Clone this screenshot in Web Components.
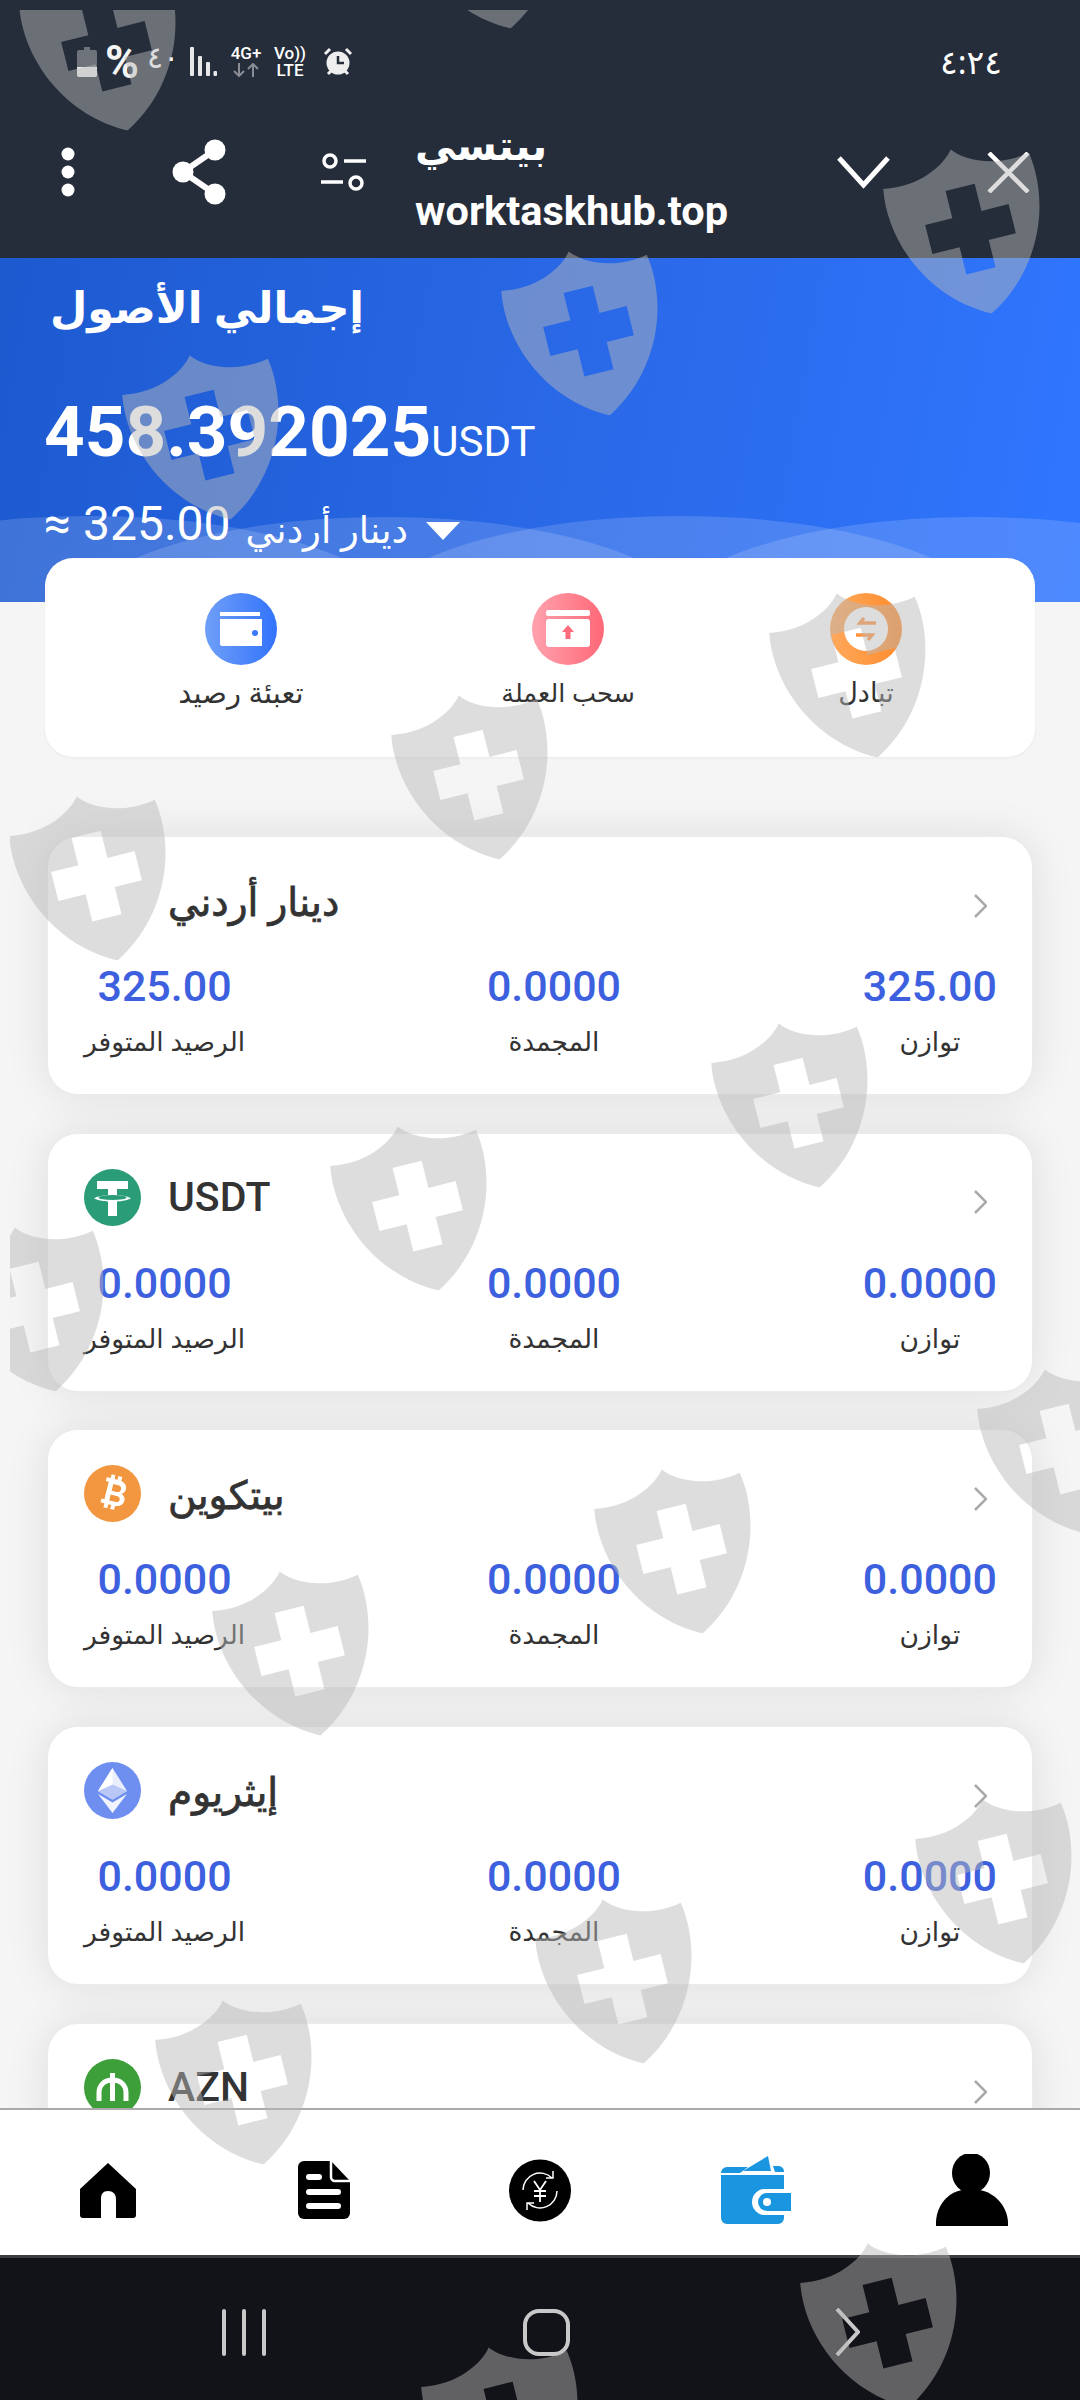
<!DOCTYPE html>
<html lang="ar">
<head>
<meta charset="utf-8">
<title>worktaskhub</title>
<style>
  html, body { margin: 0; padding: 0; background: #f5f5f5; }
  body { font-family: Roboto, "Noto Sans", "DejaVu Sans", sans-serif; }
</style>
</head>
<body>
<app-shell>
  <status-bar></status-bar>
  <site-header></site-header>
  <asset-hero></asset-hero>
  <quick-actions></quick-actions>
  <asset-card slot="cards" name="دينار أردني" available="325.00" frozen="0.0000" balance="325.00"></asset-card>
  <asset-card slot="cards" name="USDT" available="0.0000" frozen="0.0000" balance="0.0000">
    <svg slot="icon" viewBox="0 0 57 57" width="57" height="57"><circle cx="28.5" cy="28.5" r="28.5" fill="#2a9d78"/><path d="M13 12h31v8H33v6.200c5 .2 11 1.200 14 3.100-3 1.900-9 3-14 3.200V47h-9V32.500c-5-.2-11-1.300-14-3.200 3-1.900 9-2.900 14-3.100V20H13z" fill="#fff"/><ellipse cx="28.500" cy="28.500" rx="14" ry="2.600" fill="#2a9d78"/></svg>
  </asset-card>
  <asset-card slot="cards" name="بيتكوين" available="0.0000" frozen="0.0000" balance="0.0000">
    <svg slot="icon" viewBox="0 0 57 57" width="57" height="57"><circle cx="28.500" cy="28.500" r="28.500" fill="#f2963f"/><g transform="rotate(14 28.500 28.500)"><path fill="#fff" fill-rule="evenodd" d="M19 14h4v-4h4v4h3v-4h4v4.300c4 .9 6.500 3.200 6.500 6.700 0 2.500-1.300 4.400-3.300 5.500 2.800 1 4.600 3.200 4.600 6.200 0 4.300-3 6.800-7.800 7.200V44h-4v-4h-3v4h-4v-4h-4v-4h3V18h-3zm8 5v7h5c2.300 0 3.800-1.400 3.800-3.500S34.300 19 32 19zm0 11v6h6c2.400 0 4-1.200 4-3s-1.600-3-4-3z"/></g></svg>
  </asset-card>
  <asset-card slot="cards" name="إيثريوم" available="0.0000" frozen="0.0000" balance="0.0000">
    <svg slot="icon" viewBox="0 0 57 57" width="57" height="57"><circle cx="28.500" cy="28.500" r="28.500" fill="#6f8ff0"/><path d="M28.500 6L14 29l14.500 8.500L43 29z" fill="#fff" opacity=".85"/><path d="M14 29l14.500-6.500L43 29l-14.500 8.500z" fill="#b9c7f7"/><path d="M28.500 6v16.500L14 29z" fill="#fff"/><path d="M14 32l14.500 8.500L43 32 28.500 51z" fill="#fff" opacity=".9"/></svg>
  </asset-card>
  <asset-card slot="cards" name="AZN">
    <svg slot="icon" viewBox="0 0 57 57" width="57" height="57"><circle cx="28.500" cy="28.500" r="28.500" fill="#3d9f3a"/><path d="M15 42V34c0-8 5.500-13 13.500-13S42 26 42 34v8" fill="none" stroke="#fff" stroke-width="5"/><rect x="26" y="14" width="5" height="28" fill="#fff"/></svg>
  </asset-card>
  <tab-bar></tab-bar>
  <nav-bar></nav-bar>
  <watermark-layer></watermark-layer>
</app-shell>

<script>
const ARABIC = '"Noto Sans", "DejaVu Sans", sans-serif'

class AppShell extends HTMLElement {
  constructor() {
    super()
    this.attachShadow({ mode: 'open' })
    this.shadowRoot.innerHTML = `
      <style>
        :host {
          display: flex;
          flex-direction: column;
          position: relative;
          width: 1080px;
          height: 2400px;
          overflow: hidden;
          background: #f5f5f5;
        }
        .top { background: #252c3a; flex: none; }
        main { flex: 1; min-height: 0; overflow: hidden; }
        .cards {
          display: flex;
          flex-direction: column;
          gap: 39.7px;
          margin: 80px 48px 0 48px;
        }
      </style>
      <div class="top">
        <slot name="status"></slot>
        <slot name="header"></slot>
      </div>
      <main>
        <slot name="hero"></slot>
        <slot name="actions"></slot>
        <div class="cards"><slot name="cards"></slot></div>
      </main>
      <slot name="tabs"></slot>
      <slot name="nav"></slot>
      <slot name="overlay"></slot>
    `
  }
  connectedCallback() {
    const map = { 'STATUS-BAR': 'status', 'SITE-HEADER': 'header', 'ASSET-HERO': 'hero', 'QUICK-ACTIONS': 'actions', 'TAB-BAR': 'tabs', 'NAV-BAR': 'nav', 'WATERMARK-LAYER': 'overlay' }
    for (const el of this.children) {
      if (map[el.tagName]) el.slot = map[el.tagName]
    }
  }
}

class StatusBar extends HTMLElement {
  constructor() {
    super()
    this.attachShadow({ mode: 'open' })
    this.shadowRoot.innerHTML = `
      <style>
        :host {
          display: flex;
          align-items: center;
          height: 110px;
          padding: 13px 78px 0 77px;
          box-sizing: border-box;
          color: #fff;
          font-family: Roboto, ${ARABIC};
        }
        svg { flex: none; }
        .pct { width: 37px; font-size: 46px; font-weight: 700; margin-left: 8px; line-height: 1; color: #f4f4f4; }
        .num { width: 25px; font-size: 30px; margin-left: 5px; margin-top: -10px; line-height: 1; font-family: ${ARABIC}; }
        .bars { margin-left: 18px; }
        .stack {
          display: flex;
          flex-direction: column;
          align-items: center;
          font-size: 17px;
          font-weight: 500;
          line-height: 15px;
          gap: 2px;
          white-space: nowrap;
        }
        .g { margin-left: 13px; width: 32px; }
        .v { margin-left: 13px; width: 30px; }
        .alarm { margin-left: 18px; }
        .clock { margin-left: auto; font-size: 33px; font-family: ${ARABIC}; }
      </style>
      <svg width="20" height="30" viewBox="0 0 20 30"><path d="M7 0h6v3h5a2 2 0 0 1 2 2v23a2 2 0 0 1-2 2H2a2 2 0 0 1-2-2V5a2 2 0 0 1 2-2h5z" fill="#6d727b"/><path d="M0 20h20v8a2 2 0 0 1-2 2H2a2 2 0 0 1-2-2z" fill="#e8e8e8"/></svg>
      <span class="pct">%</span><span class="num">٤٠</span>
      <svg class="bars" width="27" height="29" viewBox="0 0 27 29" fill="#e8e8e8"><rect width="4" height="29" rx="1"/><rect x="8" y="9" width="4" height="20" rx="1"/><rect x="16" y="15" width="4" height="14" rx="1"/><rect x="23.500" y="24" width="3.500" height="5" rx="1"/></svg>
      <div class="stack g"><span>4G+</span>
        <svg width="26" height="14" viewBox="0 0 26 14" fill="none" stroke="#8a8d94" stroke-width="2"><path d="M6 0v13M1 8l5 5 5-5M20 14V1M15 6l5-5 5 5"/></svg>
      </div>
      <div class="stack v"><span>Vo))</span><span>LTE</span></div>
      <svg class="alarm" width="30" height="30" viewBox="0 0 30 30"><circle cx="15" cy="16" r="11.500" fill="#eee"/><path d="M15 9v7h6" fill="none" stroke="#252c3a" stroke-width="2.500"/><path d="M2 7l5-5M28 7l-5-5M5 27l3-3M25 27l-3-3" stroke="#eee" stroke-width="3"/></svg>
      <span class="clock">٤:٢٤</span>
    `
  }
}

class SiteHeader extends HTMLElement {
  constructor() {
    super()
    this.attachShadow({ mode: 'open' })
    this.shadowRoot.innerHTML = `
      <style>
        :host {
          display: flex;
          align-items: center;
          height: 148px;
          padding: 0 50px 0 61px;
          box-sizing: border-box;
          color: #fff;
        }
        svg { flex: none; margin-bottom: 24px; }
        .share { margin-left: 97px; }
        .tune { margin-left: 95px; }
        .text { margin-left: 49px; }
        .name { font: 700 41px/50px ${ARABIC}; margin: -16px 0 19px 0; }
        .host { font: 700 41.5px/46px Roboto, sans-serif; }
        .down { margin-left: auto; }
        .close { margin-left: 97px; }
      </style>
      <svg width="14" height="50" viewBox="0 0 14 50" fill="#fff"><circle cx="7" cy="7" r="6.500"/><circle cx="7" cy="25" r="6.500"/><circle cx="7" cy="43" r="6.500"/></svg>
      <svg class="share" width="54" height="66" viewBox="0 0 54 66"><path d="M43 11L11 33l32 22" fill="none" stroke="#fff" stroke-width="6"/><circle cx="43" cy="11" r="10.500" fill="#fff"/><circle cx="11" cy="33" r="10.500" fill="#fff"/><circle cx="43" cy="55" r="10.500" fill="#fff"/></svg>
      <svg class="tune" width="45" height="38" viewBox="0 0 45 38" fill="none" stroke="#fff" stroke-width="3.500"><circle cx="9" cy="8" r="6"/><path d="M23 8h22M0 29h22"/><circle cx="35" cy="30" r="6"/></svg>
      <div class="text">
        <div class="name">بيتسي</div>
        <div class="host">worktaskhub.top</div>
      </div>
      <svg class="down" width="53" height="33" viewBox="0 0 53 33" fill="none" stroke="#fff" stroke-width="5"><path d="M2 2l24.500 27L51 2"/></svg>
      <svg class="close" width="43" height="41" viewBox="0 0 43 41" fill="none" stroke="#fff" stroke-width="4.500"><path d="M2 1l39 39M41 1L2 40"/></svg>
    `
  }
}

class AssetHero extends HTMLElement {
  constructor() {
    super()
    this.attachShadow({ mode: 'open' })
    this.shadowRoot.innerHTML = `
      <style>
        :host {
          display: block;
          position: relative;
          height: 344px;
          box-sizing: border-box;
          padding: 7px 0 0 44px;
          overflow: hidden;
          color: #fff;
          background: linear-gradient(100deg, #1d5ad0 0%, #2a69e8 55%, #3076ff 100%);
        }
        .waves { position: absolute; left: 0; top: 0; }
        .content { position: relative; }
        .title { font: 700 43px/84px ${ARABIC}; margin-left: 6px; }
        .total { display: flex; align-items: baseline; margin-top: 41px; height: 84px; line-height: 84px; font-family: Roboto, sans-serif; }
        .total b { font-size: 71px; font-weight: 700; }
        .total span { font-size: 42px; }
        .fiat { display: flex; align-items: center; margin-top: 15px; height: 70px; }
        .fiat .n { font: 400 48px/70px Roboto, sans-serif; }
        .fiat .c { font: 400 37px/70px ${ARABIC}; margin-left: 15px; margin-top: 9px; }
        .fiat svg { margin-left: 18px; margin-top: 13px; }
      </style>
      <svg class="waves" width="1080" height="344" viewBox="0 0 1080 344" fill="#fff" fill-opacity=".15">
        <ellipse cx="90" cy="368" rx="320" ry="110"/>
        <ellipse cx="385" cy="369" rx="320" ry="110"/>
        <ellipse cx="680" cy="368" rx="320" ry="110"/>
        <ellipse cx="975" cy="369" rx="320" ry="110"/>
      </svg>
      <div class="content">
        <div class="title">إجمالي الأصول</div>
        <div class="total"><b>458.392025</b><span>USDT</span></div>
        <div class="fiat">
          <span class="n">≈ 325.00</span><span class="c">دينار أردني</span>
          <svg width="34" height="18" viewBox="0 0 34 18"><path d="M0 0h34L17 18z" fill="#fff"/></svg>
        </div>
      </div>
    `
  }
}

class QuickActions extends HTMLElement {
  constructor() {
    super()
    this.attachShadow({ mode: 'open' })
    this.shadowRoot.innerHTML = `
      <style>
        :host {
          display: flex;
          position: relative;
          justify-content: space-between;
          height: 199px;
          margin: -44px 45px 0 45px;
          padding: 35px 133px 0 131px;
          box-sizing: border-box;
          background: #fff;
          border-radius: 28px;
          box-shadow: 0 1px 3px rgba(0,0,0,.05);
        }
        .item { display: flex; flex-direction: column; align-items: center; width: 130px; }
        .item.small { width: 72px; }
        .label { font: 400 27px/36px ${ARABIC}; color: #333; margin-top: 9px; white-space: nowrap; }
        .wide { font-size: 29px; }
        .tight { font-size: 25.500px; }
        svg { display: block; }
      </style>
      <div class="item">
        <svg width="72" height="72" viewBox="0 0 72 72"><defs><linearGradient id="a"><stop offset="0" stop-color="#6f9ff8"/><stop offset="1" stop-color="#3273fb"/></linearGradient></defs><circle cx="36" cy="36" r="36" fill="url(#a)"/><rect x="15" y="19" width="40" height="4" fill="#fff"/><path d="M15 26h42v27H17a2 2 0 0 1-2-2z" fill="#fff"/><circle cx="50" cy="40" r="3" fill="#3a78fb"/></svg>
        <div class="label wide">تعبئة رصيد</div>
      </div>
      <div class="item">
        <svg width="72" height="72" viewBox="0 0 72 72"><defs><linearGradient id="b"><stop offset="0" stop-color="#ffa2ae"/><stop offset="1" stop-color="#ff6877"/></linearGradient></defs><circle cx="36" cy="36" r="36" fill="url(#b)"/><rect x="14" y="17" width="44" height="6" rx="2" fill="#fff"/><rect x="14" y="26" width="44" height="28" rx="3" fill="#fff"/><path d="M36 32l6 7h-3.500v7h-5v-7H30z" fill="#ff6d7c"/></svg>
        <div class="label tight">سحب العملة</div>
      </div>
      <div class="item small">
        <svg width="72" height="72" viewBox="0 0 72 72"><defs><linearGradient id="c"><stop offset="0" stop-color="#ffa95c"/><stop offset="1" stop-color="#ff8b2c"/></linearGradient></defs><circle cx="36" cy="36" r="36" fill="url(#c)"/><circle cx="36" cy="36" r="22" fill="#fff"/><path d="M46 30H30l4-5M26 42h16l-4 5" fill="none" stroke="#ff9440" stroke-width="3.500"/></svg>
        <div class="label">تبادل</div>
      </div>
    `
  }
}

class AssetCard extends HTMLElement {
  constructor() {
    super()
    this.attachShadow({ mode: 'open' })
  }
  connectedCallback() {
    const cols = [
      ['available', 'الرصيد المتوفر'],
      ['frozen', 'المجمدة'],
      ['balance', 'توازن'],
    ]
    const name = this.getAttribute('name')
    const arabic = /[\u0600-\u06ff]/.test(name)
    const body = this.hasAttribute('balance') ? cols.map(([key, label]) => `
      <div class="col">
        <div class="val">${this.getAttribute(key)}</div>
        <div class="lab">${label}</div>
      </div>`).join('') : ''
    this.shadowRoot.innerHTML = `
      <style>
        :host {
          display: block;
          flex: none;
          height: 257px;
          box-sizing: border-box;
          padding: 35px 35px 0 36px;
          background: #fff;
          border-radius: 30px;
          box-shadow: 0 0 0 2px #ebebeb, 0 0 44px rgba(0,0,0,.1);
        }
        .head { display: flex; align-items: center; height: 57px; }
        .icon { width: 57px; height: 57px; flex: none; }
        ::slotted(svg) { display: block; }
        .name { margin-left: 27px; font: 500 41px/57px Roboto, sans-serif; color: #333; }
        .name.ar { font: 400 39px/57px ${ARABIC}; -webkit-text-stroke: .8px #333; }
        .arrow { margin-left: auto; margin-right: 10px; margin-top: 10px; }
        .cols { display: flex; justify-content: space-between; margin-top: 32px; }
        .col { text-align: center; }
        .val { font: 500 43px/50px Roboto, sans-serif; color: #3d60df; }
        .lab { font: 400 26.500px/36px ${ARABIC}; color: #333; margin-top: 12px; white-space: nowrap; }
      </style>
      <div class="head">
        <div class="icon"><slot name="icon"></slot></div>
        <div class="name ${arabic ? 'ar' : ''}">${name}</div>
        <svg class="arrow" width="13" height="24" viewBox="0 0 13 24" fill="none" stroke="#aaa" stroke-width="2.500"><path d="M1 1l11 11L1 23"/></svg>
      </div>
      <div class="cols">${body}</div>
    `
  }
}

class TabBar extends HTMLElement {
  constructor() {
    super()
    this.attachShadow({ mode: 'open' })
    this.shadowRoot.innerHTML = `
      <style>
        :host {
          display: grid;
          grid-template-columns: repeat(5, 1fr);
          align-items: center;
          justify-items: center;
          flex: none;
          height: 147px;
          box-sizing: border-box;
          padding-top: 15px;
          background: #fff;
          border-top: 2px solid #aaa;
        }
        svg { display: block; }
      </style>
      <svg width="56" height="55" viewBox="0 0 56 55"><path fill-rule="evenodd" d="M28 0l28 26v26a3 3 0 0 1-3 3H36V36c0-5-3-8-8-8s-7 3-7 8v19H3a3 3 0 0 1-3-3V26z" fill="#000"/></svg>
      <svg width="52" height="58" viewBox="0 0 52 58"><path d="M6 0h27l19 20v32a6 6 0 0 1-6 6H6a6 6 0 0 1-6-6V6a6 6 0 0 1 6-6z" fill="#000"/><path d="M33 0v16a4 4 0 0 0 4 4h15" fill="none" stroke="#fff" stroke-width="2.500"/><rect x="8" y="13" width="16" height="6" rx="3" fill="#fff"/><rect x="8" y="28" width="35" height="6" rx="3" fill="#fff"/><rect x="8" y="42" width="35" height="6" rx="3" fill="#fff"/></svg>
      <svg width="62" height="63" viewBox="0 0 62 63"><circle cx="31" cy="31.500" r="31" fill="#000"/><g fill="none" stroke="#fff" stroke-width="1.500"><path d="M14 31a17 17 0 0 1 29-12M48 32a17 17 0 0 1-29 12M44 12v7h-7M18 51v-7h7"/><path d="M25 22l6 9 6-9M31 31v12M25 32h12M25 37h12" stroke-width="1.800"/></g></svg>
      <svg width="70" height="68" viewBox="0 0 70 68"><path d="M0 17a6 6 0 0 1 6-6h21l-8 6H0zM32 9L47 0l3 15H22zM52 10h6a6 6 0 0 1 5 6h-9z" fill="#1a96e0"/><path d="M0 19h63v14H44a12 12 0 0 0 0 26h19v3a6 6 0 0 1-6 6H6a6 6 0 0 1-6-6z" fill="#1a96e0"/><path d="M70 37H46a9 9 0 0 0 0 18h24z" fill="#1a96e0"/><circle cx="46" cy="46" r="4" fill="#fff"/></svg>
      <svg width="72" height="72" viewBox="0 0 72 72"><ellipse cx="35" cy="19" rx="19" ry="20" fill="#000"/><path d="M0 72c-1-18 10-33 26-36h18c16 3 29 18 28 36z" fill="#000"/></svg>
    `
  }
}

class NavBar extends HTMLElement {
  constructor() {
    super()
    this.attachShadow({ mode: 'open' })
    this.shadowRoot.innerHTML = `
      <style>
        :host {
          display: flex;
          align-items: center;
          flex: none;
          height: 145px;
          box-sizing: border-box;
          padding: 6px 0 0 222px;
          background: #121318;
          border-top: 3px solid #3a3d42;
        }
        svg { display: block; }
        .home { margin-left: 257px; }
        .back { margin-left: 265px; }
      </style>
      <svg width="44" height="47" viewBox="0 0 44 47" fill="#c8c8c8"><rect x="0" width="4" height="47" rx="2"/><rect x="20" width="4" height="47" rx="2"/><rect x="40" width="4" height="47" rx="2"/></svg>
      <svg class="home" width="47" height="47" viewBox="0 0 47 47" fill="none" stroke="#c8c8c8" stroke-width="4"><rect x="2" y="2" width="43" height="43" rx="14"/></svg>
      <svg class="back" width="25" height="48" viewBox="0 0 25 48" fill="none" stroke="#c8c8c8" stroke-width="4"><path d="M2 1l21 23L2 47"/></svg>
    `
  }
}

class WatermarkLayer extends HTMLElement {
  constructor() {
    super()
    this.attachShadow({ mode: 'open' })
    // tips of the shields, they are easier to read off than the centres
    const tips = [
      [127, 130], [510, 28], [991, 313], [609, 415], [230, 519], [877, 757],
      [499, 859], [117, 960], [819, 1187], [438, 1290], [55, 1391], [1085, 1533],
      [702, 1633], [320, 1735], [1023, 1963], [643, 2063], [263, 2164], [908, 2407], [529, 2511],
    ]
    const shields = tips.map(([x, y]) => `
      <svg style="left:${x - 20 - 80 - 10}px;top:${y - 82 - 85 - 10}px" width="160" height="170" viewBox="0 0 160 170">
        <path fill-rule="evenodd" d="M80 1C90 14 118 30 155 23 164 75 138 140 80 170 22 140-4 75 5 23 42 30 70 14 80 1zM65 40V68H37V98H65V126H95V98H123V68H95V40z"/>
      </svg>`).join('')
    this.shadowRoot.innerHTML = `
      <style>
        :host {
          display: block;
          position: absolute;
          left: 10px;
          top: 10px;
          right: 0;
          bottom: 0;
          overflow: hidden;
          pointer-events: none;
        }
        svg { position: absolute; transform: rotate(-14deg); fill: rgba(183,183,183,.48); }
      </style>
      ${shields}
    `
  }
}

customElements.define('app-shell', AppShell)
customElements.define('status-bar', StatusBar)
customElements.define('site-header', SiteHeader)
customElements.define('asset-hero', AssetHero)
customElements.define('quick-actions', QuickActions)
customElements.define('asset-card', AssetCard)
customElements.define('tab-bar', TabBar)
customElements.define('nav-bar', NavBar)
customElements.define('watermark-layer', WatermarkLayer)
</script>
</body>
</html>
